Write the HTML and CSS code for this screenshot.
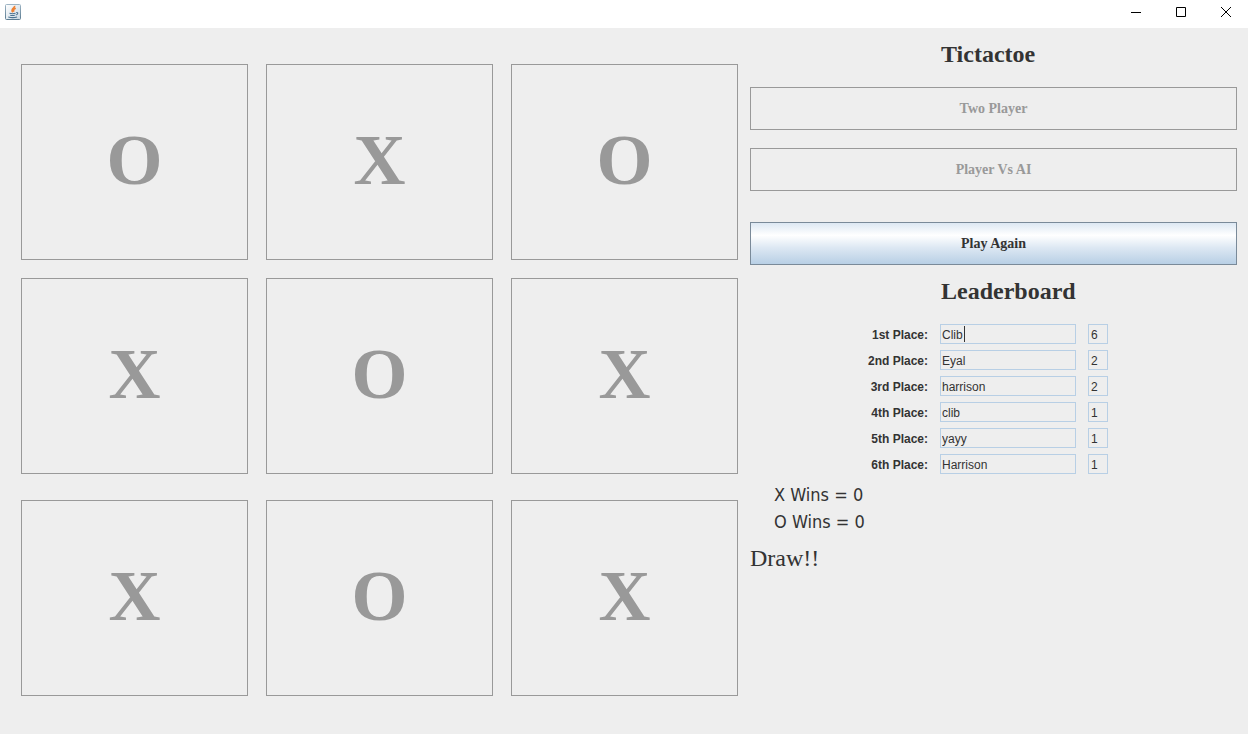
FILE: index.html
```html
<!DOCTYPE html>
<html lang="en">
<head>
<meta charset="utf-8">
<title>Tictactoe</title>
<link rel="stylesheet" href="styles.css">
</head>
<body>
<div class="window">
  <header class="titlebar">
    <svg class="app-icon" viewBox="0 0 16 16" aria-hidden="true">
      <defs>
        <linearGradient id="frame" x1="0" y1="0" x2="0" y2="1"><stop offset="0" stop-color="#9db4c4"/><stop offset="1" stop-color="#5c7c92"/></linearGradient>
        <linearGradient id="face" x1="0" y1="0" x2="1" y2="1"><stop offset="0" stop-color="#ffffff"/><stop offset="1" stop-color="#c9d8e3"/></linearGradient>
      </defs>
      <rect x=".5" y=".5" width="15" height="15" rx="1" fill="url(#face)" stroke="url(#frame)"/>
      <path d="M9.500 1.800C10.500 4 5 4.800 7.800 8.300M10.800 4.300C8 5.300 8.200 6.200 9 7.600" fill="none" stroke="#ee8133" stroke-width="1.700"/>
      <path d="M4.500 9.300q3 .8 6 0M5.200 11.200q2.500 .6 4.600 0M3.300 13q4.500 1.300 8.800 0M11.200 8.600c2.400-.4 1.800 2-.4 2.400" fill="none" stroke="#4c7391" stroke-width="1.100"/>
    </svg>
    <div class="window-controls">
      <button class="control" type="button" aria-label="Minimize"><svg viewBox="0 0 10 10"><path d="M0 5.500H10"/></svg></button>
      <button class="control" type="button" aria-label="Maximize"><svg viewBox="0 0 10 10"><path d="M.5 .5H9.500V9.500H.5Z"/></svg></button>
      <button class="control" type="button" aria-label="Close"><svg viewBox="0 0 10 10"><path d="M0 0L10 10M10 0L0 10"/></svg></button>
    </div>
  </header>
  <main class="content">
    <section class="board" aria-label="Board">
      <div class="board-row">
        <button class="tile" type="button" disabled>O</button>
        <button class="tile" type="button" disabled>X</button>
        <button class="tile" type="button" disabled>O</button>
      </div>
      <div class="board-row">
        <button class="tile" type="button" disabled>X</button>
        <button class="tile" type="button" disabled>O</button>
        <button class="tile" type="button" disabled>X</button>
      </div>
      <div class="board-row">
        <button class="tile" type="button" disabled>X</button>
        <button class="tile" type="button" disabled>O</button>
        <button class="tile" type="button" disabled>X</button>
      </div>
    </section>
    <aside class="panel">
      <h1 class="heading">Tictactoe</h1>
      <div class="actions">
        <button class="action" type="button" disabled>Two Player</button>
        <button class="action" type="button" disabled>Player Vs AI</button>
        <button class="action action-primary" type="button">Play Again</button>
      </div>
      <h2 class="heading">Leaderboard</h2>
      <div class="leaderboard">
        <div class="place">
          <label for="p1">1st Place:</label>
          <span class="field"><input class="name" id="p1" value="Clib"><span class="caret"></span></span>
          <input class="score" aria-label="1st place wins" value="6">
        </div>
        <div class="place">
          <label for="p2">2nd Place:</label>
          <span class="field"><input class="name" id="p2" value="Eyal"></span>
          <input class="score" aria-label="2nd place wins" value="2">
        </div>
        <div class="place">
          <label for="p3">3rd Place:</label>
          <span class="field"><input class="name" id="p3" value="harrison"></span>
          <input class="score" aria-label="3rd place wins" value="2">
        </div>
        <div class="place">
          <label for="p4">4th Place:</label>
          <span class="field"><input class="name" id="p4" value="clib"></span>
          <input class="score" aria-label="4th place wins" value="1">
        </div>
        <div class="place">
          <label for="p5">5th Place:</label>
          <span class="field"><input class="name" id="p5" value="yayy"></span>
          <input class="score" aria-label="5th place wins" value="1">
        </div>
        <div class="place">
          <label for="p6">6th Place:</label>
          <span class="field"><input class="name" id="p6" value="Harrison"></span>
          <input class="score" aria-label="6th place wins" value="1">
        </div>
      </div>
      <div class="tally">
        <p>X Wins = 0</p>
        <p>O Wins = 0</p>
      </div>
      <p class="result">Draw!!</p>
    </aside>
  </main>
</div>
</body>
</html>
```
FILE: styles.css
```css
* {
  box-sizing: border-box;
}

body,
h1,
h2,
p {
  margin: 0;
}

.window {
  display: flex;
  flex-direction: column;
  min-height: 100vh;
  background: #eeeeee;
  color: #333333;
  font-family: "Liberation Sans", Arial, sans-serif;
  font-size: 12px;
}

.titlebar {
  display: flex;
  justify-content: space-between;
  height: 28px;
  padding: 0 0 4px 5px;
  background: #ffffff;
}

.app-icon {
  align-self: center;
  width: 16px;
  height: 16px;
}

.window-controls {
  display: flex;
}

.control {
  display: flex;
  align-items: center;
  justify-content: center;
  width: 45px;
  padding: 0;
  border: 0;
  background: none;
}

.control svg {
  width: 10px;
  height: 10px;
  fill: none;
  stroke: #000000;
  stroke-width: 1;
}

.content {
  display: flex;
  flex: 1;
  gap: 12px;
  padding: 0 11px 0 21px;
}

.board {
  display: flex;
  flex: 717 1 0;
  flex-direction: column;
  gap: 18px;
  padding: 36px 0 38px;
}

.board-row {
  display: grid;
  flex: 1;
  grid-template-columns: repeat(3, 1fr);
  gap: 18px;
}

.board-row:last-child {
  margin-top: 8px;
}

.tile,
.action {
  border: 1px solid #999999;
  border-radius: 0;
  background: #eeeeee;
  color: #999999;
  font-family: "Liberation Serif", "Times New Roman", serif;
  font-weight: bold;
}

.tile {
  padding: 0 0 4px;
  font-size: 72px;
}

.panel {
  flex: 487 1 0;
  padding-top: 12px;
}

.heading {
  padding-left: 191px;
  font: bold 24px/28px "Liberation Serif", "Times New Roman", serif;
}

.actions {
  display: grid;
  gap: 18px;
  padding: 19px 0 12px;
}

.action {
  height: 43px;
  padding: 0;
  font-size: 14px;
}

.action-primary {
  margin-top: 13px;
  border-color: #7a8a99;
  background: linear-gradient(#dde8f3 0%, #ffffff 30%, #dde8f3 60%, #b8cfe5 100%);
  color: #333333;
}

.leaderboard {
  display: grid;
  gap: 6px;
  padding-top: 19px;
}

.place {
  display: grid;
  grid-template-columns: 178px 136px 20px;
  grid-template-rows: 20px;
  gap: 12px;
}

.place label {
  line-height: 22px;
  font-weight: bold;
  text-align: right;
}

.field {
  position: relative;
  display: flex;
}

.name,
.score {
  width: 100%;
  padding: 1px 1px 0;
  border: 1px solid #b8cfe5;
  background: #eeeeee;
  color: #333333;
  font: 12px "Liberation Sans", Arial, sans-serif;
}

.score {
  padding-left: 2px;
}

.caret {
  position: absolute;
  top: 2px;
  left: 24px;
  width: 1px;
  height: 16px;
  background: #333333;
}

.tally {
  padding: 7px 24px 0;
  font: 18px/27px "DejaVu Sans Condensed", "DejaVu Sans", sans-serif;
}

.result {
  padding-top: 9px;
  font: 24px/28px "Liberation Serif", "Times New Roman", serif;
}
```
